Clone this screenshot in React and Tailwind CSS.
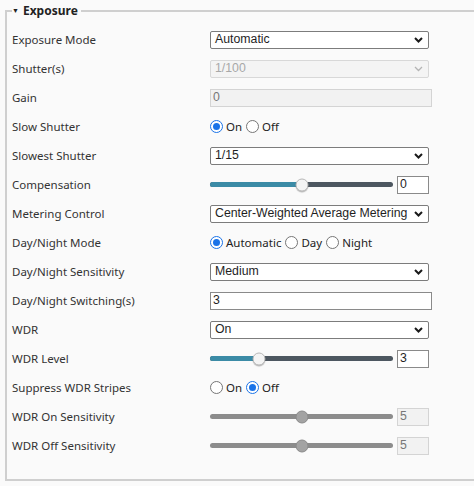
import clsx from "clsx";

const label = "font-['Noto_Sans',sans-serif] text-[11.5px] text-[#333]";
const field = "font-['Liberation_Sans',Arial,sans-serif] text-[12.3px]";

const Chevron = ({ disabled }) => (
	<svg width="9" height="6" viewBox="0 0 9 6">
		<path
			d="M1 1l3.5 3.5L8 1"
			fill="none"
			stroke={disabled ? "#b4b4b4" : "#1a1a1a"}
			strokeWidth={disabled ? 1.3 : 2}
		/>
	</svg>
);

const Select = ({ value, disabled = false }) => (
	<div
		className={clsx(
			"flex h-[18px] w-[219px] items-center justify-between rounded-[2px] border pl-[4px] pr-[5px]",
			field,
			disabled
				? "border-[#d8d8d8] bg-[#f4f4f4] text-[#a8a8a8]"
				: "border-[#7c7c7c] bg-white text-[#1f1f1f]"
		)}
	>
		<span>{value}</span>
		<Chevron disabled={disabled} />
	</div>
);

const TextInput = ({ value, disabled = false, width = "w-[222px]" }) => (
	<div
		className={clsx(
			"flex h-[18px] items-center border pl-[2px]",
			width,
			field,
			disabled
				? "border-[#d4d4d4] bg-[#f2f2f2] text-[#777]"
				: "border-[#8a8a8a] bg-white text-[#1f1f1f]"
		)}
	>
		{value}
	</div>
);

const Radio = ({ checked }) => (
	<span
		className={clsx(
			"flex h-[13px] w-[13px] items-center justify-center rounded-full border bg-white",
			checked ? "border-[#1a73e8]" : "border-[#767676]"
		)}
	>
		{checked && <span className="h-[7px] w-[7px] rounded-full bg-[#1a73e8]" />}
	</span>
);

const RadioGroup = ({ options, selected }) => (
	<div className="flex items-center font-['Noto_Sans',sans-serif] text-[11.5px] text-[#222]">
		{options.map((o) => (
			<label key={o} className="mr-[4px] flex items-center gap-[3px]">
				<Radio checked={o === selected} />
				<span>{o}</span>
			</label>
		))}
	</div>
);

const Slider = ({ pct, value, disabled = false }) => (
	<div className="flex items-center gap-[4px]">
		<div
			className={clsx(
				"relative h-[5px] w-[183px] rounded-full",
				disabled ? "bg-[#8c8c8c]" : "bg-[#4d5760]"
			)}
		>
			{!disabled && (
				<div className="h-full rounded-full bg-[#3b8ba6]" style={{ width: pct + "%" }} />
			)}
			<span
				className={clsx(
					"absolute top-1/2 h-[13px] w-[13px] -translate-x-1/2 -translate-y-1/2 rounded-full border",
					disabled
						? "border-[#8a8a8a] bg-[#a3a3a3]"
						: "border-[#b9b9b9] bg-[#f4f4f4] shadow-[0_1px_1px_rgba(0,0,0,0.25)]"
				)}
				style={{ left: pct + "%" }}
			/>
		</div>
		<TextInput value={value} disabled={disabled} width="w-[32px]" />
	</div>
);

const rows = [
	["Exposure Mode", <Select value="Automatic" />],
	["Shutter(s)", <Select value="1/100" disabled />],
	["Gain", <TextInput value="0" disabled />],
	["Slow Shutter", <RadioGroup options={["On", "Off"]} selected="On" />],
	["Slowest Shutter", <Select value="1/15" />],
	["Compensation", <Slider pct={50} value="0" />],
	["Metering Control", <Select value="Center-Weighted Average Metering" />],
	["Day/Night Mode", <RadioGroup options={["Automatic", "Day", "Night"]} selected="Automatic" />],
	["Day/Night Sensitivity", <Select value="Medium" />],
	["Day/Night Switching(s)", <TextInput value="3" />],
	["WDR", <Select value="On" />],
	["WDR Level", <Slider pct={27} value="3" />],
	["Suppress WDR Stripes", <RadioGroup options={["On", "Off"]} selected="Off" />],
	["WDR On Sensitivity", <Slider pct={50} value="5" disabled />],
	["WDR Off Sensitivity", <Slider pct={50} value="5" disabled />],
];

export default function App() {
	return (
		<div className="h-[486px] w-[474px] overflow-hidden bg-[#fafafa] pt-[2px]">
			<fieldset className="ml-[5px] w-[490px] border-2 border-[#cfcfcf] pb-[19px] pl-[5px]">
				<legend className="flex items-center pr-[3px] font-['Noto_Sans',sans-serif] text-[12px] font-bold leading-[17px] text-[#222]">
					<span className="mr-[4px] text-[7px] leading-none">▼</span>
					Exposure
				</legend>
				<div className="pt-[6px]">
					{rows.map(([name, control]) => (
						<div key={name} className="flex h-[29px] items-center">
							<div className={clsx("w-[198px]", label)}>{name}</div>
							{control}
						</div>
					))}
				</div>
			</fieldset>
		</div>
	);
}
